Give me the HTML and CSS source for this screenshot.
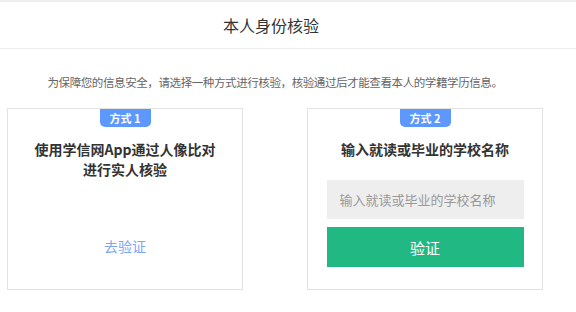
FILE: index.html
```html
<!DOCTYPE html>
<html lang="zh-CN">
<head>
    <meta charset="UTF-8">
    <meta name="viewport" content="width=device-width, initial-scale=1.0">
    <title>本人身份核验</title>
    <link rel="stylesheet" href="styles.css">
</head>
<body>
    <div class="page-header">
        <h2>本人身份核验</h2>
    </div>

    <div class="content">
        <p class="tip">为保障您的信息安全，请选择一种方式进行核验，核验通过后才能查看本人的学籍学历信息。</p>

        <div class="methods">
            <div class="method-card">
                <span class="badge">方式 1</span>
                <div class="method-title">使用学信网App通过人像比对<br>进行实人核验</div>
                <a href="#" class="go-link">去验证</a>
            </div>

            <div class="method-card">
                <span class="badge">方式 2</span>
                <div class="method-title">输入就读或毕业的学校名称</div>
                <form class="school-form">
                    <input type="text" name="school" placeholder="输入就读或毕业的学校名称">
                    <button type="submit">验证</button>
                </form>
            </div>
        </div>
    </div>

    <script>
        // Keep the demo page from navigating
        document.querySelector('.school-form').addEventListener('submit', (e) => {
            e.preventDefault();
        });
    </script>
</body>
</html>
```

FILE: styles.css
```css
body {
    margin: 0;
    font-family: "Noto Sans CJK SC", "Noto Sans", sans-serif;
    color: #333;
    background: #fff;
    border-top: 2px solid #eeeeee;
}
.page-header {
    height: 46px;
    border-bottom: 1px solid #eeeeee;
    width: 100%;
}
.page-header h2 {
    width: 542px;
    margin: 0;
    font-size: 16px;
    font-weight: normal;
    line-height: 46px;
    text-align: center;
    color: #333;
}
.content {
    width: 536px;
    padding-left: 7px;
}
.tip {
    margin: 25px 0 18px;
    font-size: 11.5px;
    letter-spacing: -0.4px;
    line-height: 16px;
    color: #666;
    text-align: center;
}
.methods {
    display: flex;
    justify-content: space-between;
}
.method-card {
    box-sizing: border-box;
    width: 236px;
    height: 182px;
    border: 1px solid #e2e2e2;
    display: flex;
    flex-direction: column;
    align-items: center;
}
.badge {
    width: 51px;
    height: 18px;
    line-height: 18px;
    background-color: #5c98fd;
    color: #fff;
    font-size: 11px;
    font-weight: bold;
    text-align: center;
    border-radius: 0 0 5px 5px;
}
.method-title {
    margin-top: 12px;
    font-size: 14px;
    font-weight: bold;
    line-height: 20px;
    text-align: center;
    color: #333;
}
.go-link {
    margin-top: auto;
    margin-bottom: 33px;
    font-size: 14px;
    line-height: 20px;
    color: #7aa6f7;
    text-decoration: none;
}
.school-form {
    width: 197px;
    margin-top: 21px;
}
.school-form input {
    box-sizing: border-box;
    width: 100%;
    height: 39px;
    padding: 0 13px;
    border: none;
    background-color: #eeeeee;
    font-family: inherit;
    font-size: 13px;
    color: #333;
    outline: none;
}
.school-form input::placeholder {
    color: #999;
}
.school-form button {
    display: block;
    width: 100%;
    height: 40px;
    margin-top: 8px;
    border: none;
    background-color: #22b884;
    color: #fff;
    font-family: inherit;
    font-size: 15px;
    cursor: pointer;
}
```
